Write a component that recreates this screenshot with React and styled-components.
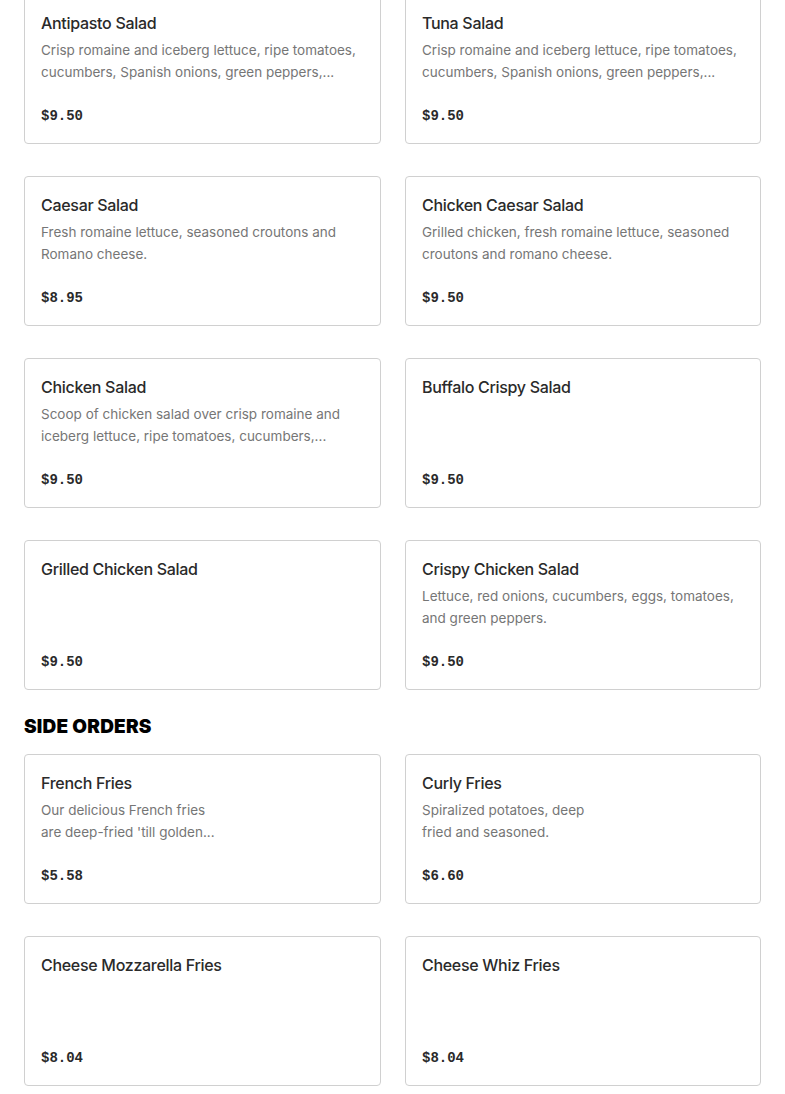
import React from 'react';
import styled, { createGlobalStyle } from 'styled-components';

const GlobalStyle = createGlobalStyle`
  html, body {
    margin: 0;
    padding: 0;
    background: #ffffff;
  }
  body {
    font-family: Inter, "Noto Sans", "Liberation Sans", sans-serif;
    color: #262626;
  }
`;

const salads = [
    {
        title: 'Antipasto Salad',
        lines: ['Crisp romaine and iceberg lettuce, ripe tomatoes,', 'cucumbers, Spanish onions, green peppers,...'],
        price: '$9.50',
    },
    {
        title: 'Tuna Salad',
        lines: ['Crisp romaine and iceberg lettuce, ripe tomatoes,', 'cucumbers, Spanish onions, green peppers,...'],
        price: '$9.50',
    },
    {
        title: 'Caesar Salad',
        lines: ['Fresh romaine lettuce, seasoned croutons and', 'Romano cheese.'],
        price: '$8.95',
    },
    {
        title: 'Chicken Caesar Salad',
        lines: ['Grilled chicken, fresh romaine lettuce, seasoned', 'croutons and romano cheese.'],
        price: '$9.50',
    },
    {
        title: 'Chicken Salad',
        lines: ['Scoop of chicken salad over crisp romaine and', 'iceberg lettuce, ripe tomatoes, cucumbers,...'],
        price: '$9.50',
    },
    { title: 'Buffalo Crispy Salad', lines: [], price: '$9.50' },
    { title: 'Grilled Chicken Salad', lines: [], price: '$9.50' },
    {
        title: 'Crispy Chicken Salad',
        lines: ['Lettuce, red onions, cucumbers, eggs, tomatoes,', 'and green peppers.'],
        price: '$9.50',
    },
];

const sides = [
    {
        title: 'French Fries',
        lines: ['Our delicious French fries', "are deep-fried 'till golden..."],
        price: '$5.58',
    },
    {
        title: 'Curly Fries',
        lines: ['Spiralized potatoes, deep', 'fried and seasoned.'],
        price: '$6.60',
    },
    { title: 'Cheese Mozzarella Fries', lines: [], price: '$8.04' },
    { title: 'Cheese Whiz Fries', lines: [], price: '$8.04' },
];

const MenuItem = ({ title, lines, price }) => (
    <Card>
        <ItemTitle>{title}</ItemTitle>
        {lines.length > 0 && (
            <ItemDesc>
                {lines.map((l, i) => (
                    <span key={i}>{l}</span>
                ))}
            </ItemDesc>
        )}
        <ItemPrice>{price}</ItemPrice>
    </Card>
);

const App = () => {
    return (
        <>
            <GlobalStyle />
            <Page>
                {/*===== Salads (scrolled, heading out of view) =====*/}
                <Grid>
                    {salads.map((item) => (
                        <MenuItem key={item.title} {...item} />
                    ))}
                </Grid>

                {/*===== Side Orders =====*/}
                <SectionTitle>SIDE ORDERS</SectionTitle>
                <Grid>
                    {sides.map((item) => (
                        <MenuItem key={item.title} {...item} />
                    ))}
                </Grid>
            </Page>
        </>
    );
};

export default App;

const Page = styled.main`
  padding: 0 24px 40px;
  margin-top: -6px;
`;

const Grid = styled.div`
  display: grid;
  grid-template-columns: 357px 356px;
  column-gap: 24px;
  row-gap: 32px;
`;

const Card = styled.div`
  box-sizing: border-box;
  height: 150px;
  display: flex;
  flex-direction: column;
  padding: 16px 16px 15px;
  border: 1px solid #d0d0d0;
  border-radius: 4px;
  background: #fff;
`;

const ItemTitle = styled.h3`
  margin: 0;
  font-size: 16px;
  line-height: 24px;
  font-weight: 500;
  color: #2a2a2a;
  letter-spacing: -0.3px;
`;

const ItemDesc = styled.p`
  margin: 4px 0 0;
  display: flex;
  flex-direction: column;
  font-size: 13.5px;
  line-height: 22px;
  color: #767676;
  white-space: nowrap;
`;

const ItemPrice = styled.span`
  margin-top: auto;
  font-family: "Liberation Mono", "DejaVu Sans Mono", monospace;
  font-size: 14px;
  line-height: 24px;
  font-weight: 700;
  color: #2a2a2a;
`;

const SectionTitle = styled.h2`
  margin: 25px 0 15px;
  font-size: 19px;
  line-height: 24px;
  font-weight: 900;
  letter-spacing: 0.2px;
  color: #000;
`;
